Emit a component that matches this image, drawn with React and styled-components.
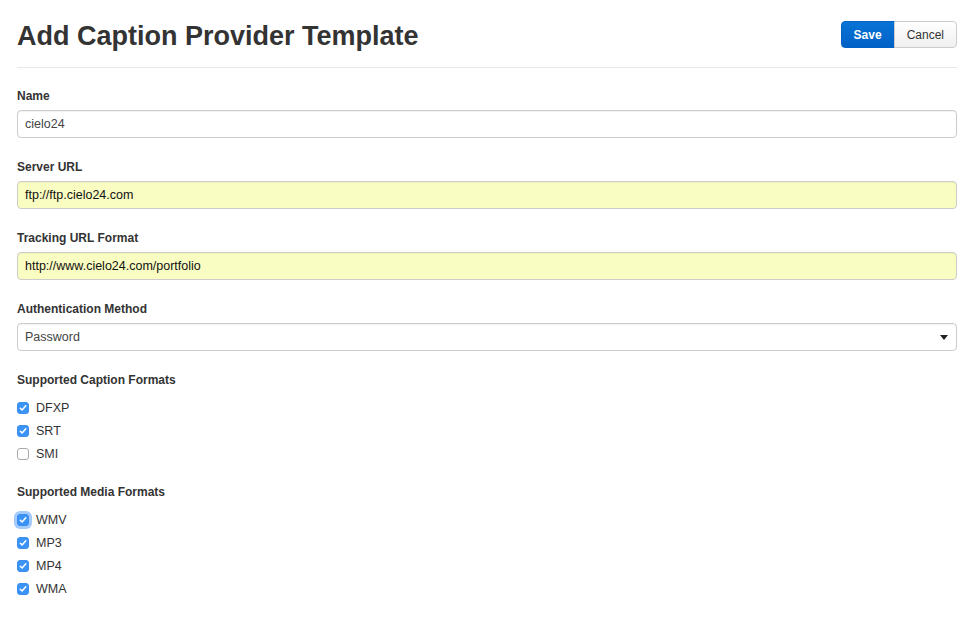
import styled, { createGlobalStyle } from "styled-components";

const GlobalStyle = createGlobalStyle`
    body {
        margin: 0;
        background: #fff;
        font-family: "Liberation Sans", Arial, sans-serif;
        color: #333;
    }
`;

const Page = styled.div`
    padding: 0 17px 30px 17px;
`;

const Header = styled.div`
    display: flex;
    align-items: center;
    justify-content: space-between;
    height: 67px;
    border-bottom: 1px solid #e8e8e8;
    margin-bottom: 20px;
`;

const Title = styled.h1`
    margin: 0;
    padding-top: 5px;
    font-size: 27px;
    font-weight: bold;
    color: #333;
`;

const ButtonGroup = styled.div`
    display: flex;
    margin-top: 2px;
`;

const Button = styled.button`
    height: 27px;
    padding: 0 12px;
    font-family: "Liberation Sans", Arial, sans-serif;
    font-size: 12px;
    border: 1px solid ${(p) => (p.primary ? "#0062c4" : "#ccc")};
    color: ${(p) => (p.primary ? "#fff" : "#333")};
    font-weight: ${(p) => (p.primary ? "bold" : "normal")};
    background: ${(p) => (p.primary ? "linear-gradient(#0a74d6, #0060c6)" : "linear-gradient(#fff, #f0f0f0)")};
    border-radius: ${(p) => (p.primary ? "4px 0 0 4px" : "0 4px 4px 0")};
    margin-left: ${(p) => (p.primary ? "0" : "-1px")};
`;

const Group = styled.div`
    margin-bottom: ${(p) => p.after || "21px"};
`;

const Label = styled.div`
    font-size: 12px;
    font-weight: bold;
    line-height: 16px;
    color: #333;
    margin-bottom: ${(p) => p.gap || "6px"};
`;

const Field = styled.div`
    box-sizing: border-box;
    height: 28px;
    display: flex;
    align-items: center;
    justify-content: space-between;
    padding: 0 7px;
    border: 1px solid #ccc;
    border-radius: 4px;
    font-size: 12.5px;
    color: ${(p) => (p.filled ? "#111" : "#444")};
    background: ${(p) => (p.filled ? "#fafdc2" : "#fff")};
    box-shadow: inset 0 1px 1px rgba(0, 0, 0, 0.05);
`;

const Caret = styled.span`
    width: 0;
    height: 0;
    border-left: 4px solid transparent;
    border-right: 4px solid transparent;
    border-top: 5px solid #222;
    margin-right: 1px;
`;

const CheckRow = styled.div`
    display: flex;
    align-items: center;
    height: 23px;
    font-size: 12.5px;
    color: #333;
`;

const Box = styled.span`
    box-sizing: border-box;
    width: 12px;
    height: 12px;
    margin-right: 7px;
    border-radius: 3px;
    display: flex;
    align-items: center;
    justify-content: center;
    background: ${(p) => (p.checked ? "#3b94f5" : "#fff")};
    border: 1px solid ${(p) => (p.checked ? "#3a8ff0" : "#aaa")};
    box-shadow: ${(p) => (p.focused ? "0 0 0 3px rgba(90, 160, 250, 0.55)" : "none")};
`;

const Check = ({ label, checked, focused }) => (
    <CheckRow>
        <Box checked={checked} focused={focused}>
            {checked && (
                <svg width="8" height="8" viewBox="0 0 8 8">
                    <path d="M1.3 4.2 L3.1 6 L6.8 1.8" fill="none" stroke="#fff" strokeWidth="1.5" strokeLinecap="round" strokeLinejoin="round" />
                </svg>
            )}
        </Box>
        {label}
    </CheckRow>
);

const App = () => {
    return (
        <Page>
            <GlobalStyle />
            <Header>
                <Title>Add Caption Provider Template</Title>
                <ButtonGroup>
                    <Button primary>Save</Button>
                    <Button>Cancel</Button>
                </ButtonGroup>
            </Header>

            <Group>
                <Label>Name</Label>
                <Field>cielo24</Field>
            </Group>
            <Group>
                <Label>Server URL</Label>
                <Field filled>ftp://ftp.cielo24.com</Field>
            </Group>
            <Group>
                <Label>Tracking URL Format</Label>
                <Field filled>http://www.cielo24.com/portfolio</Field>
            </Group>
            <Group>
                <Label>Authentication Method</Label>
                <Field>
                    Password
                    <Caret />
                </Field>
            </Group>
            <Group after="19px">
                <Label gap="8px">Supported Caption Formats</Label>
                <Check label="DFXP" checked />
                <Check label="SRT" checked />
                <Check label="SMI" />
            </Group>
            <Group after="19px">
                <Label gap="8px">Supported Media Formats</Label>
                <Check label="WMV" checked focused />
                <Check label="MP3" checked />
                <Check label="MP4" checked />
                <Check label="WMA" checked />
            </Group>
        </Page>
    );
};

export default App;
